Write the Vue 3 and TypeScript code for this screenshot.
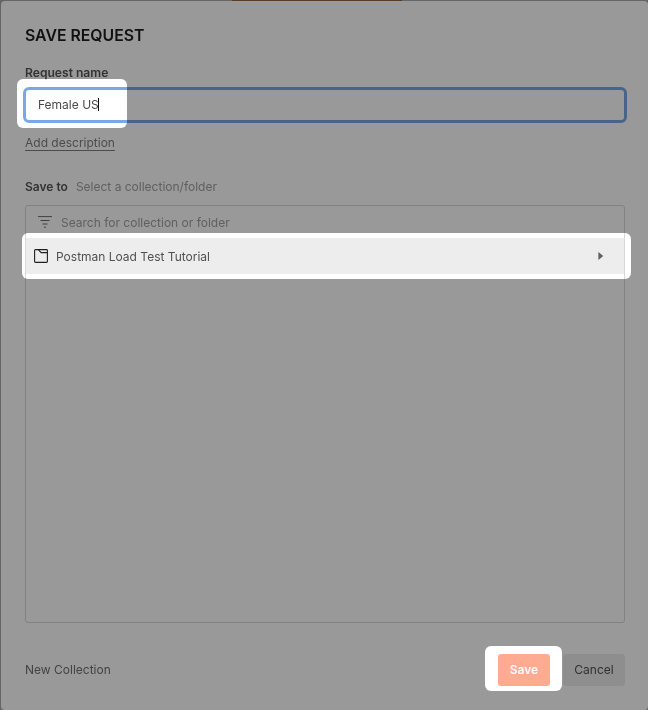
<script setup lang="ts">
const spots = [
  { l: 17, t: 79, w: 110, h: 49 },
  { l: 22, t: 233, w: 609, h: 46 },
  { l: 485, t: 646, w: 77, h: 45 },
]
function spotStyle(s: { l: number; t: number; w: number; h: number }) {
  return { left: s.l + 'px', top: s.t + 'px', width: s.w + 'px', height: s.h + 'px' }
}
</script>

<template>
  <div class="screen">
    <div class="topbar"><span class="accent"></span></div>
    <section class="dialog">
      <h1 class="title">SAVE REQUEST</h1>
      <label class="label">Request name</label>
      <div class="input"><span>Female US</span><i class="caret"></i></div>
      <a class="add">Add description</a>
      <div class="save-to">
        <b>Save to</b>
        <span>Select a collection/folder</span>
      </div>
      <div class="picker">
        <div class="search">
          <svg width="14" height="12" viewBox="0 0 14 12" fill="none" stroke="#6b6b6b" stroke-width="1">
            <path d="M0 .6h14M2.5 4.5h9M4.5 8h5M6 11.2h2" />
          </svg>
          <span>Search for collection or folder</span>
        </div>
        <div class="row">
          <svg width="14" height="14" viewBox="0 0 14 14" fill="none" stroke="#1f1f1f" stroke-width="1.1">
            <path d="M1.5.6h11a.9.9 0 0 1 .9.9v11a.9.9 0 0 1-.9.9h-11a.9.9 0 0 1-.9-.9v-11a.9.9 0 0 1 .9-.9ZM4.2.6l3 3h6.2" />
          </svg>
          <span class="name">Postman Load Test Tutorial</span>
          <svg class="arrow" width="6" height="8" viewBox="0 0 6 8"><path d="M.4 0 5.2 4 .4 8Z" fill="#5f5f5f" /></svg>
        </div>
      </div>
      <footer class="footer">
        <span class="new">New Collection</span>
        <div class="actions">
          <button class="save">Save</button>
          <button class="cancel">Cancel</button>
        </div>
      </footer>
    </section>
    <div class="dim">
      <div v-for="(s, i) in spots" :key="i" class="spot" :style="spotStyle(s)"></div>
    </div>
  </div>
</template>

<style>
html, body { margin: 0; background: #aaa; }
</style>

<style scoped>
.screen {
  position: relative;
  width: 648px;
  height: 710px;
  overflow: hidden;
  background: #a8a8a8;
  font-family: Inter, "Noto Sans", sans-serif;
  color: #3a3a3a;
}
.topbar { position: absolute; inset: 0 0 auto 0; height: 1px; }
.accent { position: absolute; left: 232px; width: 170px; top: 0; height: 1px; background: #94633f; }
.dialog {
  position: absolute;
  left: 1px;
  top: 1px;
  width: 647px;
  height: 709px;
  box-sizing: border-box;
  padding: 24px 23px 0 24px;
  background: #fff;
  border-radius: 4px;
  display: flex;
  flex-direction: column;
}
.title { margin: 1px 0 0; font-size: 15.8px; line-height: 20px; font-weight: 600; color: #1c1c1c; }
.label { margin-top: 19px; font-size: 12.1px; line-height: 16px; font-weight: 600; color: #555; }
.input {
  margin: 6px 0 0 -2px;
  width: 604px;
  height: 36px;
  box-sizing: border-box;
  border: 3px solid #7aa7e6;
  border-radius: 6px;
  padding: 0 12px 1px;
  display: flex;
  align-items: center;
  font-size: 12px;
  color: #4a4a4a;
}
.caret { width: 1px; height: 13px; background: #111; margin-left: -1px; }
.add {
  align-self: flex-start;
  margin-top: 12px;
  font-size: 12px;
  line-height: 15px;
  color: #7f7f7f;
  border-bottom: 1px solid #7f7f7f;
}
.save-to { margin-top: 28px; display: flex; gap: 8px; font-size: 12px; line-height: 16px; }
.save-to b { font-weight: 600; color: #555; }
.save-to span { color: #a0a0a0; }
.picker {
  margin-top: 10px;
  width: 600px;
  height: 418px;
  box-sizing: border-box;
  border: 1px solid #d8d8d8;
  border-radius: 3px;
}
.search {
  height: 32px;
  display: flex;
  align-items: center;
  gap: 9px;
  padding-left: 12px;
  font-size: 12px;
  color: #a0a0a0;
}
.row {
  height: 36px;
  background: #ededed;
  display: flex;
  align-items: center;
  padding: 0 20px 0 8px;
  font-size: 12px;
  color: #505050;
}
.name { margin-left: 8px; }
.arrow { margin-left: auto; }
.footer { margin-top: 31px; width: 600px; display: flex; align-items: center; justify-content: space-between; }
.new { font-size: 12px; color: #707070; padding-bottom: 2px; }
.actions { display: flex; gap: 13px; }
button { height: 32px; border: 0; border-radius: 3px; font-family: inherit; font-size: 12px; padding: 0 0 1px; }
.save { width: 52px; background: #ffab91; color: #fff; font-weight: 600; }
.cancel { width: 62px; background: #ededed; color: #505050; }
.dim {
  position: absolute;
  inset: 0;
  background: #999;
  mix-blend-mode: multiply;
  pointer-events: none;
}
.spot { position: absolute; background: #fff; border-radius: 6px; }
</style>
